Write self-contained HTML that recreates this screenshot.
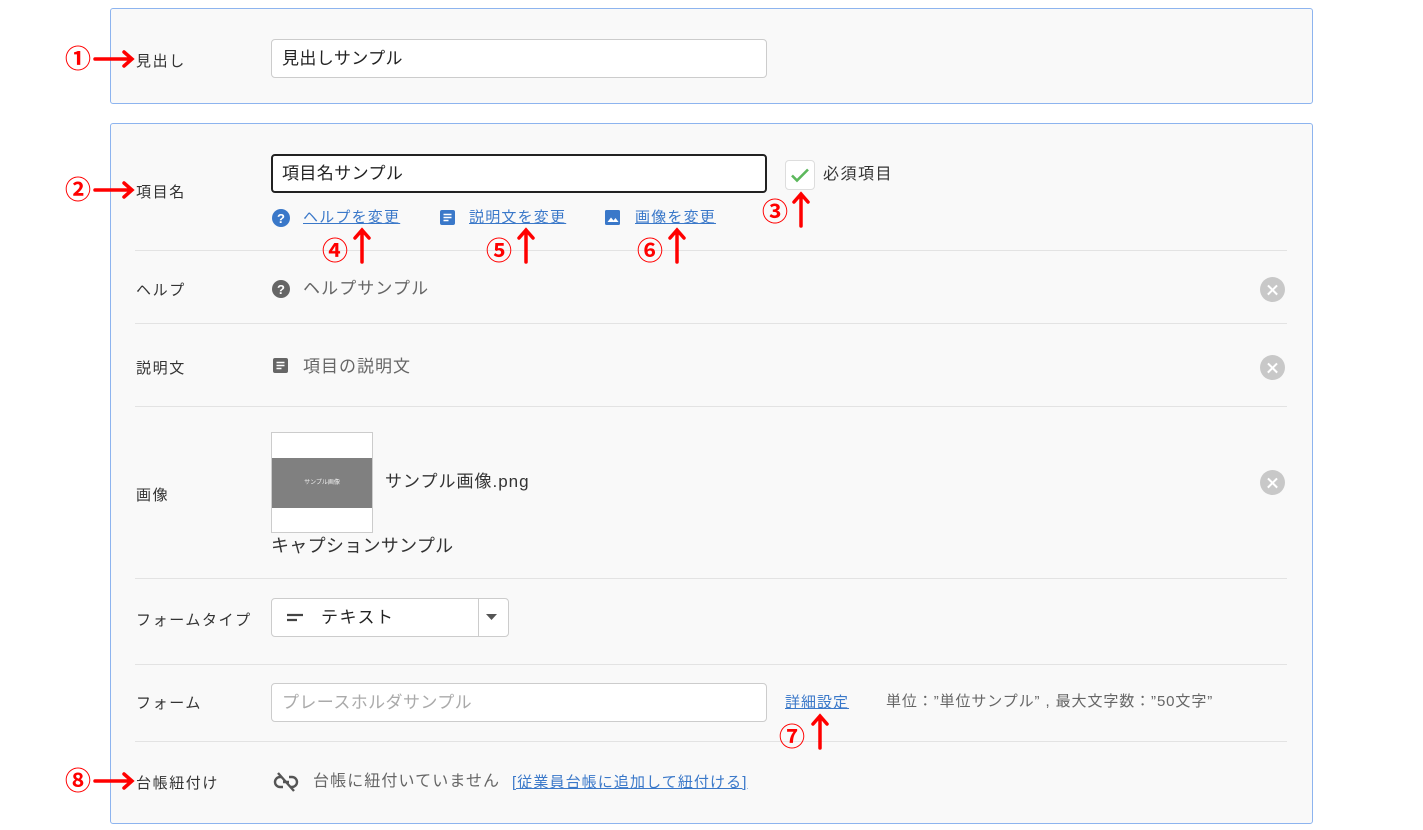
<!DOCTYPE html>
<html><head><meta charset="utf-8">
<style>
*{box-sizing:border-box;margin:0;padding:0}
body{width:1423px;height:830px;background:#fff;position:relative;overflow:hidden;font-family:"Liberation Sans","Noto Sans CJK JP",sans-serif;color:#333}
.a{position:absolute}
.box{position:absolute;left:110px;width:1203px;border:1px solid #8db4ef;border-radius:3px;background:#f9f9f9}
.lbl{position:absolute;left:136px;font-size:15px;color:#333;line-height:20px;letter-spacing:1.6px}
.inp{position:absolute;left:271px;width:496px;height:39px;border:1px solid #ccc;border-radius:4px;background:#fff;font-size:17px;line-height:37px;padding-left:10px;color:#222;letter-spacing:0.4px}
.sep{position:absolute;left:135px;width:1152px;height:1px;background:#e3e3e3}
.link{position:absolute;font-size:15px;color:#3a78c9;text-decoration:underline;line-height:20px;letter-spacing:1.2px}
.gray{position:absolute;font-size:17px;color:#666;line-height:22px;letter-spacing:1.1px}
.x{position:absolute;left:1260px;width:25px;height:25px;border-radius:50%;background:#c8c8c8}
.x:before,.x:after{content:"";position:absolute;left:6px;top:11.5px;width:13px;height:2.2px;background:#fff;transform:rotate(45deg)}
.x:after{transform:rotate(-45deg)}
.num{position:absolute;color:#f00;font-size:26px;font-weight:bold;line-height:28px}
</style></head><body>

<div class="box" style="top:8px;height:96px"></div>
<div class="box" style="top:123px;height:701px"></div>

<div class="lbl" style="top:52px">見出し</div>
<div class="inp" style="top:39px">見出しサンプル</div>

<div class="lbl" style="top:183px">項目名</div>
<div class="inp" style="top:154px;height:39px;border:2px solid #222;line-height:35px;padding-left:9px">項目名サンプル</div>

<div class="a" style="left:785px;top:160px;width:30px;height:30px;border:1px solid #ddd;border-radius:4px;background:#fff"></div>
<svg class="a" style="left:785px;top:160px" width="30" height="30"><path d="M7 15.5l5 5 11-11" stroke="#5cb85c" stroke-width="2.6" fill="none"/></svg>
<div class="a" style="left:823px;top:164px;font-size:16px;color:#333;line-height:22px;letter-spacing:1.5px">必須項目</div>

<svg class="a" style="left:271px;top:208px" width="20" height="20"><circle cx="10" cy="10" r="9" fill="#3a78c9"/><text x="10" y="15" font-size="13" font-weight="bold" fill="#fff" text-anchor="middle" font-family="Liberation Sans">?</text></svg>
<div class="link" style="left:303px;top:208px">ヘルプを変更</div>
<svg class="a" style="left:439px;top:209px" width="18" height="18"><rect x="1" y="1" width="15" height="15" rx="2" fill="#3a78c9"/><path d="M4.5 5.5h8M4.5 8.5h8M4.5 11.5h5" stroke="#fff" stroke-width="1.6"/></svg>
<div class="link" style="left:469px;top:208px">説明文を変更</div>
<svg class="a" style="left:604px;top:209px" width="18" height="18"><rect x="1" y="1" width="15" height="15" rx="1.5" fill="#3a78c9"/><path d="M3.5 13l3.5-4.5 2.5 3 2-2.5 3 4z" fill="#fff"/></svg>
<div class="link" style="left:635px;top:208px">画像を変更</div>

<div class="sep" style="top:250px"></div>
<div class="lbl" style="top:281px">ヘルプ</div>
<svg class="a" style="left:271px;top:279px" width="20" height="20"><circle cx="10" cy="10" r="9" fill="#666"/><text x="10" y="15" font-size="13" font-weight="bold" fill="#fff" text-anchor="middle" font-family="Liberation Sans">?</text></svg>
<div class="gray" style="left:303px;top:278px">ヘルプサンプル</div>
<div class="x" style="top:277px"></div>

<div class="sep" style="top:323px"></div>
<div class="lbl" style="top:359px">説明文</div>
<svg class="a" style="left:272px;top:357px" width="18" height="18"><rect x="1" y="1" width="15" height="15" rx="2" fill="#666"/><path d="M4.5 5.5h8M4.5 8.5h8M4.5 11.5h5" stroke="#fff" stroke-width="1.6"/></svg>
<div class="gray" style="left:303px;top:356px;letter-spacing:1px">項目の説明文</div>
<div class="x" style="top:355px"></div>

<div class="sep" style="top:406px"></div>
<div class="lbl" style="top:486px">画像</div>
<div class="a" style="left:271px;top:432px;width:102px;height:101px;border:1px solid #ccc;background:#fff"></div>
<div class="a" style="left:272px;top:458px;width:100px;height:50px;background:#808080;color:#eee;font-size:6px;text-align:center;line-height:50px">サンプル画像</div>
<div class="a" style="left:385px;top:471px;font-size:17px;color:#333;line-height:22px;letter-spacing:1px">サンプル画像.png</div>
<div class="a" style="left:271px;top:535px;font-size:18px;color:#333;line-height:22px;letter-spacing:0.3px">キャプションサンプル</div>
<div class="x" style="top:470px"></div>

<div class="sep" style="top:578px"></div>
<div class="lbl" style="top:611px">フォームタイプ</div>
<div class="a" style="left:271px;top:598px;width:238px;height:39px;border:1px solid #ccc;border-radius:4px;background:#fff"></div>
<div class="a" style="left:478px;top:599px;width:1px;height:37px;background:#ccc"></div>
<svg class="a" style="left:286px;top:611px" width="20" height="14"><path d="M1 4h16M1 9h10" stroke="#444" stroke-width="2.2"/></svg>
<div class="a" style="left:321px;top:607px;font-size:17px;color:#222;line-height:22px;letter-spacing:1.5px">テキスト</div>
<svg class="a" style="left:485px;top:613px" width="14" height="8"><path d="M1 1h11l-5.5 6z" fill="#555"/></svg>

<div class="sep" style="top:664px"></div>
<div class="lbl" style="top:694px">フォーム</div>
<div class="inp" style="top:683px;color:#aaa;font-size:17px">プレースホルダサンプル</div>
<div class="link" style="left:785px;top:693px;letter-spacing:1px">詳細設定</div>
<div class="a" style="left:886px;top:693px;font-size:15px;color:#666;line-height:18px;letter-spacing:0.9px">単位：”単位サンプル” , 最大文字数：”50文字”</div>

<div class="sep" style="top:741px"></div>
<div class="lbl" style="top:774px">台帳紐付け</div>
<svg class="a" style="left:273px;top:770px" width="26" height="24" viewBox="0 0 26 24"><path d="M9 7H7a5 5 0 000 10h3M16 7h3a5 5 0 010 10h-2M10 12h6" stroke="#555" stroke-width="2.4" fill="none"/><path d="M5 3l16 18" stroke="#555" stroke-width="2.4"/></svg>
<div class="a" style="left:313px;top:772px;font-size:16px;color:#666;line-height:20px;letter-spacing:1.1px">台帳に紐付いていません</div>
<div class="link" style="left:512px;top:773px;letter-spacing:1.1px">[従業員台帳に追加して紐付ける]</div>

<!-- annotations -->
<div class="num" style="left:65px;top:45px">①</div>
<div class="num" style="left:65px;top:176px">②</div>
<div class="num" style="left:65px;top:767px">⑧</div>
<div class="num" style="left:762px;top:198px">③</div>
<div class="num" style="left:322px;top:237px">④</div>
<div class="num" style="left:486px;top:237px">⑤</div>
<div class="num" style="left:637px;top:237px">⑥</div>
<div class="num" style="left:779px;top:723px">⑦</div>
<svg class="a" style="left:0;top:0" width="1423" height="830">
<g stroke="#f00" stroke-width="3.5" fill="none" stroke-linecap="round">
<path d="M95 59h36M124 52l8 7-8 7"/>
<path d="M95 190h36M124 183l8 7-8 7"/>
<path d="M95 781h36M124 774l8 7-8 7"/>
<path d="M801 226v-32M794 202l7-8 7 8"/>
<path d="M362 262v-32M355 238l7-8 7 8"/>
<path d="M526 262v-32M519 238l7-8 7 8"/>
<path d="M677 262v-32M670 238l7-8 7 8"/>
<path d="M820 748v-32M813 724l7-8 7 8"/>
</g></svg>
</body></html>
